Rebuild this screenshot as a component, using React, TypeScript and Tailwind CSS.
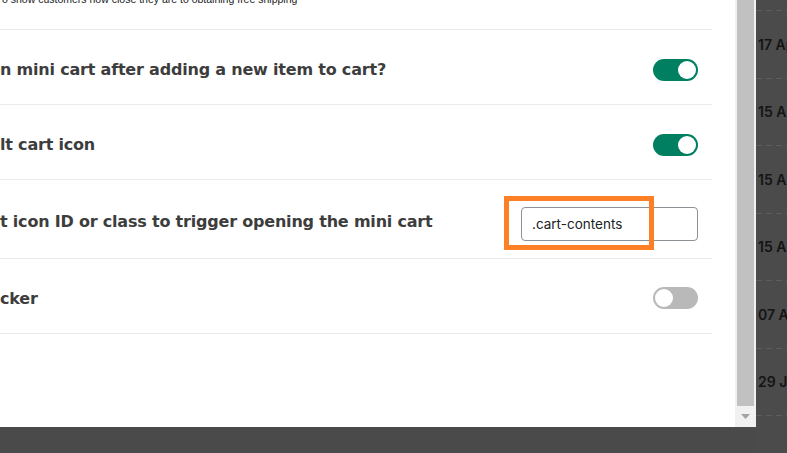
const Toggle = ({ on }: { on: boolean }) => (
  <div
    className={`w-[45px] h-[22px] rounded-full flex items-center px-[2px] ${
      on ? 'bg-[#008060] justify-end' : 'bg-[#b9b9b9] justify-start'
    }`}
  >
    <div className="w-[18px] h-[18px] rounded-full bg-white" />
  </div>
);

const dates = ['17 Apr', '15 Apr', '15 Apr', '15 Apr', '07 Apr', '29 Jan'];

const DashLine = () => (
  <svg width="31" height="1" className="block">
    <line x1="0" y1="0.5" x2="31" y2="0.5" stroke="#5c5c5c" strokeWidth="1" strokeDasharray="6 4" />
  </svg>
);

export default function App() {
  const label = 'text-[16px] font-bold tracking-[-0.2px] text-[#3d3d3d] whitespace-nowrap';

  return (
    <div
      className="w-[787px] h-[453px] bg-[#4b4b4b] flex overflow-hidden"
      style={{ fontFamily: '"DejaVu Sans", sans-serif' }}
    >
      {/* modal */}
      <div className="w-[756px] flex flex-col shrink-0">
        <div className="h-[427px] bg-white flex">
          <div className="w-[735px]">
            <div className="w-[712px]">
              <div className="h-[30px] border-b border-[#ebebeb] overflow-hidden">
                <p
                  className="-mt-[8px] pl-[2px] text-[10.5px] text-[#202223] whitespace-nowrap"
                  style={{ fontFamily: '"Liberation Sans", sans-serif' }}
                >
                  o show customers how close they are to obtaining free shipping
                </p>
              </div>

              <div className="h-[75px] pt-[6px] border-b border-[#ebebeb] flex items-center justify-between pr-[14px]">
                <span className={label}>n mini cart after adding a new item to cart?</span>
                <Toggle on />
              </div>

              <div className="h-[75px] pt-[6px] border-b border-[#ebebeb] flex items-center justify-between pr-[14px]">
                <span className={label}>lt cart icon</span>
                <Toggle on />
              </div>

              <div className="h-[79px] pt-[10px] border-b border-[#ebebeb] flex items-center justify-between pr-[14px]">
                <span className={`${label} -mt-[4px]`}>t icon ID or class to trigger opening the mini cart</span>
                <div className="relative">
                  <div
                    className="w-[177px] h-[34px] border border-[#8c9196] rounded-[4px] flex items-center pl-[10px] text-[13.5px] text-[#202223]"
                    style={{ fontFamily: 'Inter, sans-serif' }}
                  >
                    .cart-contents
                  </div>
                  <div className="absolute -left-[17px] -top-[11px] w-[150px] h-[54px] border-[5px] border-[#fd8026]" />
                </div>
              </div>

              <div className="h-[75px] pt-[4px] border-b border-[#ebebeb] flex items-center justify-between pr-[14px]">
                <span className={`${label} mt-[2px]`}>cker</span>
                <Toggle on={false} />
              </div>
            </div>
          </div>

          {/* scrollbar */}
          <div className="w-[21px] bg-[#f1f1f1] flex flex-col">
            <div className="h-[406px] ml-[2px] w-[17px] bg-[#c1c1c1]" />
            <div className="flex-1 flex items-center justify-center">
              <svg width="9" height="5" viewBox="0 0 9 5">
                <path d="M0 0h9L4.5 5z" fill="#a3a3a3" />
              </svg>
            </div>
          </div>
        </div>
        <div className="flex-1 bg-[#4a4a4b]" />
      </div>

      {/* page behind overlay */}
      <div className="w-[31px] pt-[10px] overflow-hidden" style={{ fontFamily: 'Inter, sans-serif' }}>
        {dates.map((d, i) => (
          <div key={i}>
            <DashLine />
            <div className="h-[66.5px] flex items-center pl-[2px] text-[14px] font-semibold text-[#141414] whitespace-nowrap">
              {d}
            </div>
          </div>
        ))}
        <DashLine />
      </div>
    </div>
  );
}
